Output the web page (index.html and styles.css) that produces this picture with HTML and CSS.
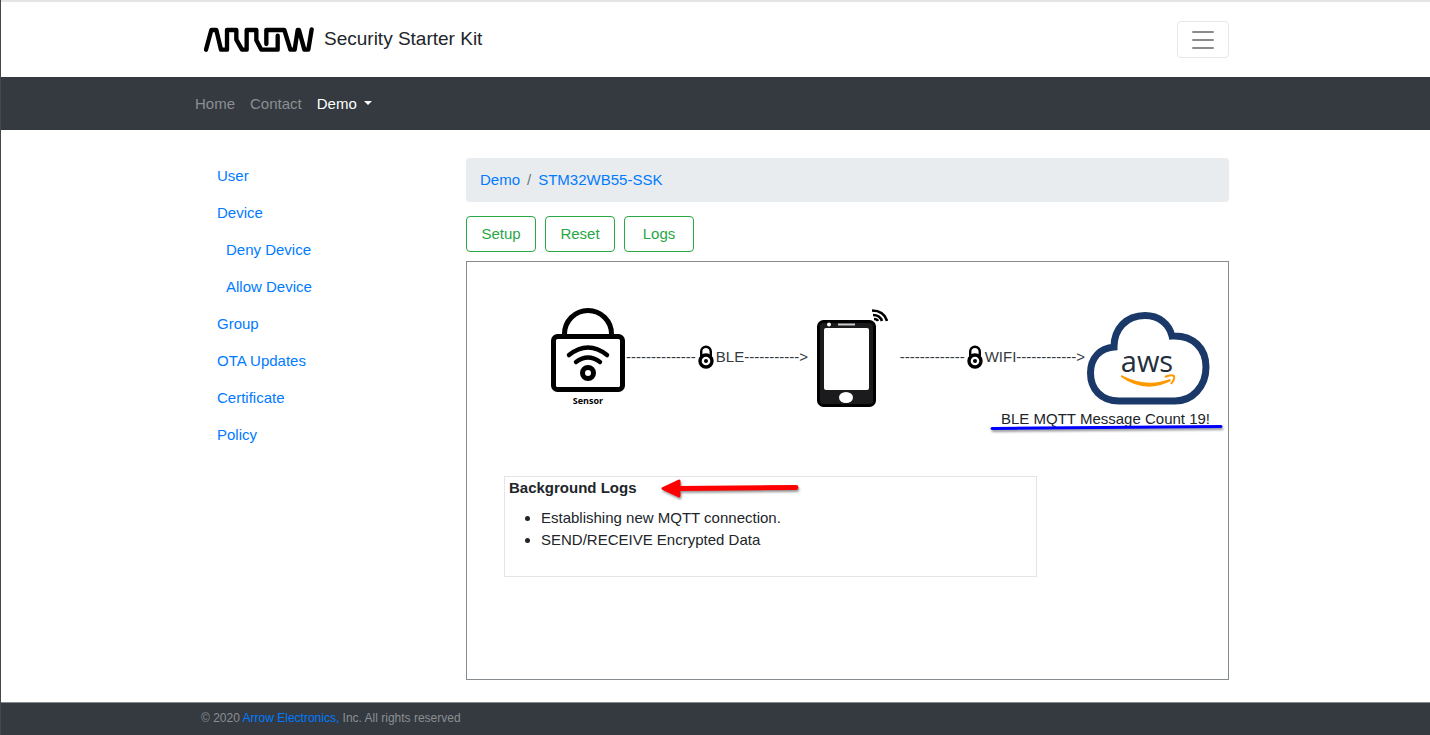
FILE: index.html
```html
<!DOCTYPE html>
<html lang="en">
<head>
  <meta charset="utf-8">
  <meta name="viewport" content="width=device-width, initial-scale=1">
  <title>Security Starter Kit</title>
  <link rel="stylesheet" href="styles.css">
</head>
<body>
  <svg class="sprite" aria-hidden="true">
    <symbol id="lock" viewBox="0 0 16 24">
      <path d="M3.200 11V6.500a4.800 4.800 0 0 1 9.600 0V11" fill="none" stroke="#000" stroke-width="2.400"/>
      <circle cx="8" cy="16" r="6" fill="#fff" stroke="#000" stroke-width="3.400"/>
      <circle cx="8" cy="16" r="2" fill="#000"/>
    </symbol>
  </svg>

  <header class="brand-bar band">
    <div class="container brand-row">
      <a class="brand" href="#">
        <svg class="brand-logo" viewBox="44 83 330 75" role="img" aria-label="Arrow">
          <path d="M50 151 66 92H81L95 151H113V92H141V121L158 151H172V92H201V123L216 151H265V109M231 134V92H285L303 151H316L325 92H329L345 151H357L367 90" fill="none" stroke="#000" stroke-width="13" stroke-linecap="round" stroke-linejoin="round"/>
        </svg>
        <span>Security Starter Kit</span>
      </a>
      <button class="toggler" type="button" aria-label="Toggle navigation">
        <svg viewBox="0 0 24 20" class="toggler-icon"><path d="M2 2H22M2 10H22M2 18H22" stroke="#8c8c8c" stroke-width="2" stroke-linecap="round"/></svg>
      </button>
    </div>
  </header>

  <nav class="nav-bar band">
    <div class="container nav-row">
      <a class="nav-link" href="#">Home</a>
      <a class="nav-link" href="#">Contact</a>
      <a class="nav-link active caret" href="#">Demo</a>
    </div>
  </nav>

  <main class="main band">
    <div class="container layout">
      <nav class="sidebar">
        <a href="#">User</a>
        <a href="#">Device</a>
        <a class="sub" href="#">Deny Device</a>
        <a class="sub" href="#">Allow Device</a>
        <a href="#">Group</a>
        <a href="#">OTA Updates</a>
        <a href="#">Certificate</a>
        <a href="#">Policy</a>
      </nav>

      <section class="content">
        <div class="breadcrumb">
          <a href="#">Demo</a><span>/</span><a href="#">STM32WB55-SSK</a>
        </div>
        <div class="actions">
          <button class="btn" type="button">Setup</button>
          <button class="btn" type="button">Reset</button>
          <button class="btn" type="button">Logs</button>
        </div>

        <div class="panel">
          <div class="diagram">
            <div class="sensor">
              <svg class="sensor-icon" viewBox="0 0 74 85">
                <path d="M13.500 28V26a23.500 23.500 0 0 1 47 0v2" fill="none" stroke="#000" stroke-width="5"/>
                <rect x="2.500" y="28.500" width="69" height="53" rx="4" fill="#fff" stroke="#000" stroke-width="5"/>
                <path d="M18 47Q37 32 56 47M25 54Q37 45 49 54" fill="none" stroke="#000" stroke-width="4.500" stroke-linecap="round"/>
                <circle cx="37" cy="65" r="5.500" fill="none" stroke="#000" stroke-width="5"/>
              </svg>
              <span class="sensor-label">Sensor</span>
            </div>
            <div class="link"><span>--------------</span><svg class="lock"><use href="#lock"/></svg><span>BLE-----------&gt;</span></div>
            <svg class="phone" viewBox="0 0 71 98">
              <rect x="1.500" y="12.500" width="56" height="84" rx="5" fill="#1b1b1d" stroke="#000" stroke-width="3"/>
              <rect x="7" y="19" width="45" height="62" rx="2" fill="#fff"/>
              <circle cx="12" cy="15.500" r="2" fill="#fff"/>
              <path d="M21 15.500H38" stroke="#ccc" stroke-width="2"/>
              <ellipse cx="29" cy="88.500" rx="7" ry="5.500" fill="#fff"/>
              <path d="M55 1.500Q67 1.500 70 12M56 6Q63 6 65 12M57 10Q60 10 61 12" fill="none" stroke="#000" stroke-width="2.600"/>
            </svg>
            <div class="link"><span>-------------</span><svg class="lock"><use href="#lock"/></svg><span>WIFI------------&gt;</span></div>
            <svg class="cloud" viewBox="0 0 124 94" role="img" aria-label="AWS">
              <path d="M33 90C15 90 4.500 78 4.500 62C4.500 47 14 37 28 36C28 18 40 4.500 59 4.500C73 4.500 83 13 86 25C108 24 120 38 120 56C120 76 106 90 89 90Z" fill="#fff" stroke="#1a3868" stroke-width="7"/>
              <text class="aws" x="61" y="61" text-anchor="middle">aws</text>
              <path d="M35 64Q60 77 84 68L85 70Q59 83 35 66Z" fill="#ff9900"/>
              <path d="M79 66Q85 63 88 65Q89 68 85 73" fill="none" stroke="#ff9900" stroke-width="2"/>
            </svg>
          </div>

          <div class="status">
            <p class="count">BLE MQTT Message Count 19!
              <svg class="underline" viewBox="0 0 234 8"><path d="M2 4.500 231 2.500" stroke="#00f" stroke-width="3" stroke-linecap="round"/></svg>
            </p>
          </div>

          <div class="logs">
            <h2>Background Logs
              <svg class="arrow" viewBox="0 0 142 24"><path d="M16 11.500 135 10.500" stroke="#f00" stroke-width="5" stroke-linecap="round"/><path d="M2 11.500 18 4V19Z" fill="#f00" stroke="#f00" stroke-width="3" stroke-linejoin="round"/></svg>
            </h2>
            <ul>
              <li>Establishing new MQTT connection.</li>
              <li>SEND/RECEIVE Encrypted Data</li>
            </ul>
          </div>
        </div>
      </section>
    </div>
  </main>

  <footer class="footer band">
    <div class="container">
      <p>© 2020 <a href="#">Arrow Electronics,</a> Inc. All rights reserved</p>
    </div>
  </footer>
</body>
</html>
```
FILE: styles.css
```css
* {
  box-sizing: border-box;
}

body {
  margin: 0;
  min-height: 100vh;
  display: flex;
  flex-direction: column;
  border-left: 1px solid #43484c;
  background: #fff;
  color: #212529;
  font: 15px/22px "Liberation Sans", Arial, sans-serif;
}

a {
  color: #007bff;
  text-decoration: none;
}

.sprite {
  position: absolute;
  width: 0;
  height: 0;
}

.band {
  padding-right: 7px;
}

.container {
  max-width: 1034px;
  margin: 0 auto;
}

.brand-bar {
  border-top: 2px solid #e4e4e4;
}

.brand-row {
  display: flex;
  align-items: center;
  justify-content: space-between;
  padding: 19px 0 19px 9px;
}

.brand {
  display: flex;
  align-items: center;
  gap: 10px;
  color: #212529;
  font-size: 19px;
  line-height: 26px;
}

.brand span {
  padding-bottom: 2px;
}

.brand-logo {
  width: 110px;
  height: 25px;
}

.toggler {
  display: flex;
  align-items: center;
  justify-content: center;
  width: 52px;
  height: 37px;
  padding: 0;
  border: 1px solid #e6e6e6;
  border-radius: 4px;
  background: none;
}

.toggler-icon {
  width: 24px;
  height: 20px;
}

.nav-bar {
  background: #343a40;
}

.nav-row {
  display: flex;
  gap: 15px;
  padding: 16px 0 15px;
}

.nav-link {
  color: #8b8f92;
}

.nav-link.active {
  color: #fff;
}

.caret::after {
  content: "";
  display: inline-block;
  margin-left: 7px;
  vertical-align: 4px;
  border: 4px solid transparent;
  border-top-color: #fff;
  border-bottom: 0;
}

.main {
  flex: 1;
  padding-top: 28px;
  padding-bottom: 22px;
}

.layout {
  display: grid;
  grid-template-columns: 241px minmax(0, 1fr);
  gap: 30px;
}

.sidebar {
  display: flex;
  flex-direction: column;
  padding-left: 22px;
}

.sidebar a {
  padding: 7px 0 8px;
}

.sidebar .sub {
  padding-left: 9px;
}

.breadcrumb {
  display: flex;
  gap: 7px;
  padding: 11px 14px;
  border-radius: 4px;
  background: #e9ecef;
}

.breadcrumb span {
  color: #6c757d;
}

.actions {
  display: flex;
  gap: 9px;
  margin: 14px 0 9px;
}

.btn {
  width: 70px;
  padding: 6px 0;
  border: 1px solid #28a745;
  border-radius: 4px;
  background: #fff;
  color: #28a745;
  font: inherit;
}

.panel {
  min-height: 419px;
  padding-top: 46px;
  border: 1px solid #868b90;
}

.diagram {
  display: flex;
  align-items: center;
  justify-content: space-between;
  padding: 0 18px 0 84px;
}

.sensor {
  display: flex;
  flex-direction: column;
  align-items: center;
}

.sensor-icon {
  width: 74px;
  height: 85px;
}

.sensor-label {
  color: #000;
  font: bold 9px/15px "Open Sans", sans-serif;
}

.link {
  display: flex;
  align-items: center;
  gap: 2px;
  padding-bottom: 2px;
  color: #343a40;
  white-space: nowrap;
}

.sensor + .link {
  margin-right: 8px;
}

.phone + .link {
  margin-left: 11px;
}

.lock {
  width: 16px;
  height: 24px;
}

.phone,
.cloud {
  flex: none;
}

.phone {
  width: 71px;
  height: 98px;
}

.cloud {
  width: 124px;
  height: 94px;
}

.aws {
  fill: #232f3e;
  font: 500 29px "Open Sans", sans-serif;
}

.status {
  display: flex;
  justify-content: flex-end;
  padding: 0 18px;
}

.count {
  position: relative;
  margin: 0;
}

.underline {
  position: absolute;
  right: -14px;
  bottom: -2px;
  width: 234px;
  height: 8px;
  filter: drop-shadow(1px 2px 1px #999);
}

.logs {
  width: 70%;
  min-height: 101px;
  margin: 46px 0 0 37px;
  padding: 0 4px 18px;
  border: 1px solid #e3e5e9;
}

.logs h2 {
  position: relative;
  width: fit-content;
  margin: 0 0 8px;
  font-size: 15px;
  line-height: 22px;
}

.arrow {
  position: absolute;
  left: 152px;
  top: 0;
  width: 142px;
  height: 24px;
  filter: drop-shadow(1px 2px 1px #999);
}

.logs ul {
  margin: 0;
  padding-left: 32px;
}

.footer {
  border-top: 1px solid #868b90;
  background: #343a40;
  color: #8b8f92;
  font-size: 12px;
}

.footer p {
  margin: 0;
  padding: 4px 6px 6px;
}
```
